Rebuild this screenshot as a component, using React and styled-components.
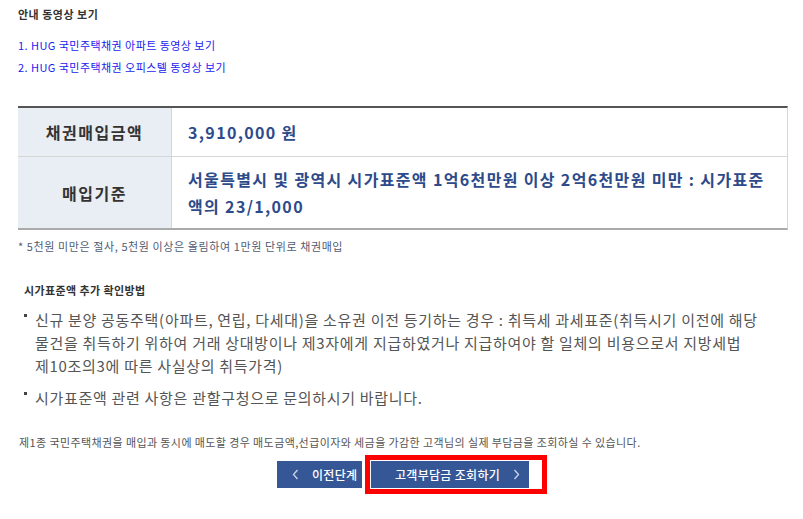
import React from "react";
import styled, { createGlobalStyle } from "styled-components";

const Global = createGlobalStyle`
  html, body { margin: 0; padding: 0; background: #fff; }
  body { font-family: "Noto Sans CJK KR", "Noto Sans", sans-serif; color: #333; }
`;

const Page = styled.div`
  width: 803px;
  height: 519px;
  padding: 6px 15px 0 18px;
  box-sizing: border-box;
  overflow: hidden;
`;

const Title = styled.div`
  font-size: 11px;
  line-height: 16px;
  font-weight: 700;
  letter-spacing: 0.5px;
  color: #333;
`;

const LinkList = styled.div`
  margin-top: 12px;
  display: flex;
  flex-direction: column;
`;

const VideoLink = styled.a`
  font-size: 11px;
  line-height: 22px;
  letter-spacing: 0.45px;
  color: #1a1af0;
  text-decoration: none;
`;

const Table = styled.div`
  margin-top: 28px;
  display: grid;
  grid-template-columns: 154px 1fr;
  border-top: 2px solid #555;
  border-bottom: 2px solid #aaa;
  border-right: 1px solid #d6d6d6;
`;

const HeadCell = styled.div`
  background: #e9edf4;
  border-right: 1px solid #d6d6d6;
  border-bottom: ${(p) => (p.$last ? "none" : "1px solid #d6d6d6")};
  height: ${(p) => p.$h}px;
  display: flex;
  align-items: center;
  justify-content: center;
  font-size: 16px;
  font-weight: 700;
  letter-spacing: 1.5px;
  color: #333;
  box-sizing: border-box;
`;

const ValueCell = styled.div`
  border-bottom: ${(p) => (p.$last ? "none" : "1px solid #d6d6d6")};
  height: ${(p) => p.$h}px;
  display: flex;
  align-items: center;
  padding-left: 16px;
  font-size: 16px;
  line-height: 27px;
  font-weight: 700;
  letter-spacing: 1.35px;
  color: #2d4a8a;
  box-sizing: border-box;
`;

const Note = styled.div`
  margin-top: 8px;
  font-size: 11px;
  line-height: 16px;
  letter-spacing: 0.6px;
  color: #4f5b74;
`;

const SubTitle = styled.div`
  margin-top: 28px;
  margin-left: 6px;
  font-size: 11px;
  line-height: 16px;
  font-weight: 700;
  letter-spacing: 0.4px;
  color: #333;
`;

const BulletList = styled.ul`
  list-style: none;
  margin: 10px 0 0 0;
  padding: 0;
  display: flex;
  flex-direction: column;
  gap: 9px;
`;

const Bullet = styled.li`
  position: relative;
  padding-left: 17px;
  font-size: 15px;
  line-height: 23px;
  letter-spacing: 0.7px;
  color: #555;
  &::before {
    content: "";
    position: absolute;
    left: 6px;
    top: 6px;
    width: 3px;
    height: 3px;
    background: #444;
  }
`;

const Info = styled.div`
  margin-top: 25px;
  margin-left: 1px;
  font-size: 11px;
  line-height: 16px;
  letter-spacing: 0.4px;
  color: #555;
`;

const ButtonRow = styled.div`
  margin-top: 5px;
  margin-left: 18px;
  display: flex;
  justify-content: center;
  align-items: center;
  gap: 3px;
`;

const Button = styled.button`
  width: ${(p) => p.$w}px;
  height: 27px;
  border: none;
  background: #355796;
  color: #fff;
  font-family: inherit;
  font-size: 12px;
  font-weight: 500;
  letter-spacing: 0.3px;
  display: flex;
  align-items: center;
  padding: 0 0 0 ${(p) => p.$pl}px;
  gap: ${(p) => p.$gap}px;
  cursor: pointer;
`;

const Chevron = styled.span`
  display: inline-flex;
  color: #c6d0e3;
`;

const Highlight = styled.div`
  border: 5px solid #ff0000;
  padding: 1px 13px 1px 1px;
`;

function ChevronIcon({ dir }) {
  return (
    <Chevron>
      <svg width="7" height="11" viewBox="0 0 7 11">
        <path
          d={dir === "left" ? "M5.5 1 L1.5 5.5 L5.5 10" : "M1.5 1 L5.5 5.5 L1.5 10"}
          fill="none"
          stroke="currentColor"
          strokeWidth="1.4"
        />
      </svg>
    </Chevron>
  );
}

export default function App() {
  return (
    <>
      <Global />
      <Page>
        <Title>안내 동영상 보기</Title>
        <LinkList>
          <VideoLink href="#">1. HUG 국민주택채권 아파트 동영상 보기</VideoLink>
          <VideoLink href="#">2. HUG 국민주택채권 오피스텔 동영상 보기</VideoLink>
        </LinkList>
        <Table>
          <HeadCell $h={49}>채권매입금액</HeadCell>
          <ValueCell $h={49}>3,910,000 원</ValueCell>
          <HeadCell $h={71} $last>매입기준</HeadCell>
          <ValueCell $h={71} $last>
            <span>
              서울특별시 및 광역시 시가표준액 1억6천만원 이상 2억6천만원 미만 : 시가표준
              <br />
              액의 23/1,000
            </span>
          </ValueCell>
        </Table>
        <Note>* 5천원 미만은 절사, 5천원 이상은 올림하여 1만원 단위로 채권매입</Note>
        <SubTitle>시가표준액 추가 확인방법</SubTitle>
        <BulletList>
          <Bullet>
            신규 분양 공동주택(아파트, 연립, 다세대)을 소유권 이전 등기하는 경우 : 취득세 과세표준(취득시기 이전에 해당
            <br />
            물건을 취득하기 위하여 거래 상대방이나 제3자에게 지급하였거나 지급하여야 할 일체의 비용으로서 지방세법
            <br />
            제10조의3에 따른 사실상의 취득가격)
          </Bullet>
          <Bullet>시가표준액 관련 사항은 관할구청으로 문의하시기 바랍니다.</Bullet>
        </BulletList>
        <Info>
          제1종 국민주택채권을 매입과 동시에 매도할 경우 매도금액,선급이자와 세금을 가감한 고객님의 실제 부담금을 조회하실 수 있습니다.
        </Info>
        <ButtonRow>
          <Button $w={85} $pl={15} $gap={13}>
            <ChevronIcon dir="left" />
            이전단계
          </Button>
          <Highlight>
            <Button $w={158} $pl={24} $gap={13}>
              고객부담금 조회하기
              <ChevronIcon dir="right" />
            </Button>
          </Highlight>
        </ButtonRow>
      </Page>
    </>
  );
}
